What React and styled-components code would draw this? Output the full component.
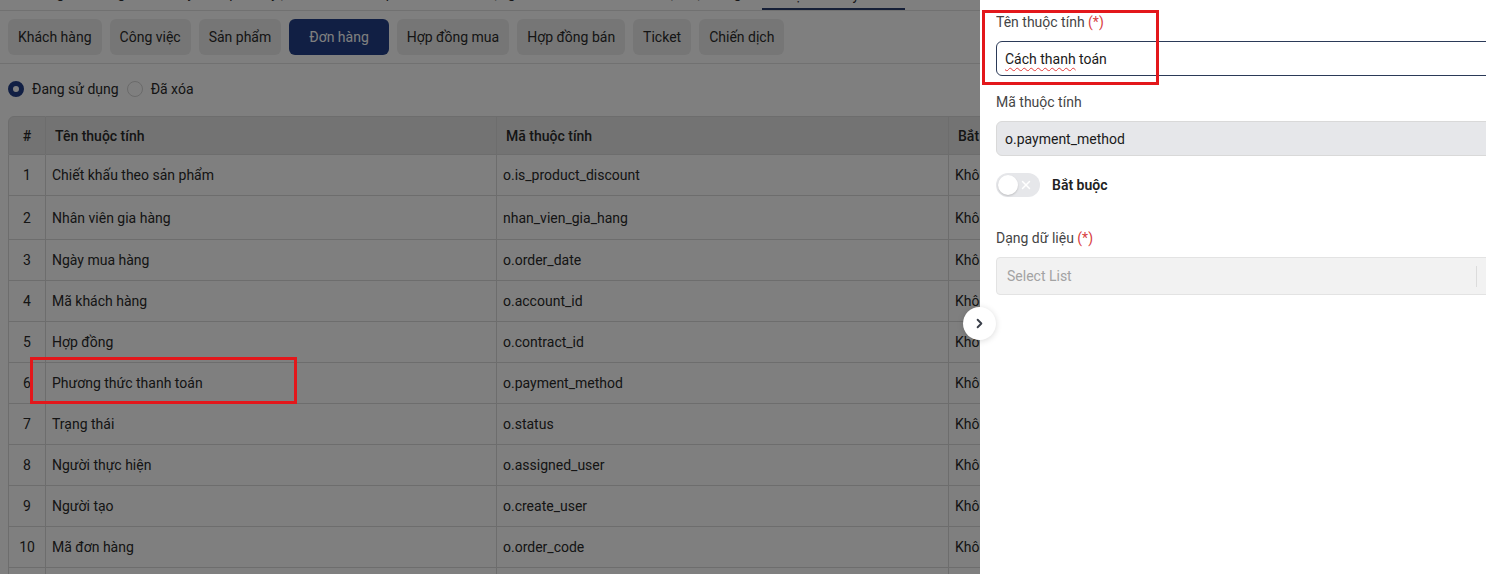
import React from 'react';
import styled, { createGlobalStyle } from 'styled-components';
import { ChevronRight, X } from 'lucide-react';

const GlobalStyle = createGlobalStyle`
  html, body { margin: 0; padding: 0; background: #fff; }
  body { font-family: Roboto, "Liberation Sans", Arial, sans-serif; font-size: 14px; color: #2a2a2a; overflow: hidden; }
  * { box-sizing: border-box; }
`;

const Page = styled.div`
  position: relative;
  width: 1486px;
  height: 574px;
  overflow: hidden;
  background: #fff;
`;

const Main = styled.div`
  display: flex;
  flex-direction: column;
`;

const TopNav = styled.div`
  display: flex;
  height: 11px;
  border-bottom: 1px solid #e3e3e3;
  overflow: hidden;
`;

const TopNavItem = styled.div`
  flex: 0 0 ${p => p.$w}px;
  height: 10px;
  display: flex;
  align-items: flex-end;
  justify-content: center;
  border-bottom: 2px solid ${p => (p.$active ? '#2a3f6e' : 'transparent')};
  overflow: visible;
`;

const TopNavLabel = styled.span`
  line-height: 16px;
  margin-bottom: ${p => (p.$active ? 5 : 7)}px;
  white-space: nowrap;
  color: #2a2a2a;
`;

const Toolbar = styled.div`
  display: flex;
  gap: 8px;
  padding: 8px;
  border-bottom: 1px solid #e3e3e3;
`;

const TabButton = styled.button`
  height: 36px;
  padding: 0 ${p => (p.$active ? 20 : 10)}px;
  border: none;
  border-radius: 6px;
  font: inherit;
  font-size: 14px;
  background: ${p => (p.$active ? '#223f88' : '#ededed')};
  color: ${p => (p.$active ? '#ffffff' : '#2a2a2a')};
  cursor: pointer;
`;

const RadioRow = styled.div`
  display: flex;
  align-items: center;
  height: 52px;
  padding: 0 8px 2px;
  gap: 8px;
`;

const RadioOption = styled.label`
  display: flex;
  align-items: center;
  gap: 8px;
  color: #2a2a2a;
`;

const RadioDot = styled.span`
  width: 16px;
  height: 16px;
  border-radius: 50%;
  border: ${p => (p.$checked ? '5px solid #223f88' : '1px solid #d4d4d4')};
  background: #fff;
  display: inline-block;
`;

const TableWrap = styled.div`
  padding: 0 8px;
`;

const Table = styled.table`
  border-collapse: separate;
  border-spacing: 0;
  width: 1470px;
  table-layout: fixed;
`;

const Th = styled.th`
  height: 39px;
  padding: 0 ${p => (p.$center ? 0 : 9)}px;
  background: #e6e6e6;
  font-weight: 500;
  text-align: ${p => (p.$center ? 'center' : 'left')};
  color: #2a2a2a;
  border-top: 1px solid #dadada;
  border-right: 1px solid #dadada;
  border-bottom: 1px solid #dadada;
  &:first-child { border-left: 1px solid #dadada; border-top-left-radius: 6px; }
`;

const Td = styled.td`
  height: ${p => (p.$tall ? 44 : 41)}px;
  padding: 0 ${p => (p.$center ? 0 : 6)}px;
  text-align: ${p => (p.$center ? 'center' : 'left')};
  border-right: 1px solid #dadada;
  border-bottom: 1px solid #dadada;
  white-space: nowrap;
  overflow: hidden;
  &:first-child { border-left: 1px solid #dadada; }
`;

const Backdrop = styled.div`
  position: absolute;
  inset: 0;
  background: rgba(0, 0, 0, 0.5);
  z-index: 1;
`;

const Drawer = styled.aside`
  position: absolute;
  top: 0;
  right: 0;
  bottom: 0;
  width: 506px;
  background: #fff;
  z-index: 2;
  padding: 0 0 0 16px;
`;

const DrawerBody = styled.div`
  width: 100%;
  height: 100%;
  overflow: hidden;
`;

const Form = styled.div`
  width: 524px;
  display: flex;
  flex-direction: column;
`;

const FieldLabel = styled.div`
  line-height: 20px;
  margin-top: ${p => p.$mt}px;
  color: #454545;
`;

const Req = styled.span`
  color: #d8403f;
`;

const InputBox = styled.div`
  margin-top: 9px;
  height: 35px;
  border: 1px solid ${p => (p.$focus ? '#2b3a58' : '#d9d9d9')};
  background: ${p => (p.$disabled ? '#e6e7ea' : '#fff')};
  border-radius: 6px;
  display: flex;
  align-items: center;
  padding: 0 8px;
  color: #1a1a1a;
`;

const Misspelled = styled.span`
  text-decoration: underline wavy #e23b3b;
  text-decoration-thickness: 1px;
  text-underline-offset: 3px;
`;

const ToggleRow = styled.div`
  margin-top: 17px;
  display: flex;
  align-items: center;
  gap: 12px;
`;

const Switch = styled.span`
  position: relative;
  width: 44px;
  height: 24px;
  border-radius: 12px;
  background: #e6e7ea;
  display: inline-flex;
  align-items: center;
  justify-content: flex-end;
  padding-right: 7px;
  color: #fff;
`;

const SwitchKnob = styled.span`
  position: absolute;
  left: 2px;
  top: 2px;
  width: 20px;
  height: 20px;
  border-radius: 50%;
  background: #fff;
  box-shadow: 0 1px 2px rgba(0, 0, 0, 0.18);
`;

const ToggleLabel = styled.span`
  font-weight: 600;
  color: #222;
`;

const SelectBox = styled.div`
  margin-top: 9px;
  height: 38px;
  border: 1px solid #e3e3e3;
  background: #f2f2f2;
  border-radius: 4px;
  display: flex;
  align-items: center;
`;

const SelectValue = styled.div`
  flex: 1;
  padding-left: 10px;
  color: #a3a3a3;
`;

const SelectSep = styled.span`
  width: 1px;
  height: 21px;
  background: #dcdcdc;
  margin-right: 42px;
`;

const CollapseButton = styled.button`
  position: absolute;
  left: -17px;
  top: 307px;
  width: 33px;
  height: 33px;
  border-radius: 50%;
  border: none;
  background: #fff;
  box-shadow: 0 1px 6px rgba(0, 0, 0, 0.15);
  display: flex;
  align-items: center;
  justify-content: center;
  color: #3a3f4a;
  padding: 0;
  z-index: 3;
`;

const Highlight = styled.div`
  position: absolute;
  border: 3px solid #e3171b;
  z-index: 4;
  pointer-events: none;
`;

const topTabs = [
  { label: 'Thông tin chung', w: 150 },
  { label: 'Quy trình phê duyệt', w: 160 },
  { label: 'Mẫu in phiếu', w: 140 },
  { label: 'Trạng thái đơn', w: 150 },
  { label: 'Danh mục hệ thống', w: 162 },
  { label: 'Thuộc tính tùy chỉnh', w: 143, active: true },
  { label: 'Kết nối ứng dụng', w: 150 },
];

const tabs = ['Khách hàng', 'Công việc', 'Sản phẩm', 'Đơn hàng', 'Hợp đồng mua', 'Hợp đồng bán', 'Ticket', 'Chiến dịch'];

const rows = [
  ['Chiết khấu theo sản phẩm', 'o.is_product_discount'],
  ['Nhân viên gia hàng', 'nhan_vien_gia_hang', true],
  ['Ngày mua hàng', 'o.order_date'],
  ['Mã khách hàng', 'o.account_id'],
  ['Hợp đồng', 'o.contract_id'],
  ['Phương thức thanh toán', 'o.payment_method'],
  ['Trạng thái', 'o.status'],
  ['Người thực hiện', 'o.assigned_user'],
  ['Người tạo', 'o.create_user'],
  ['Mã đơn hàng', 'o.order_code'],
  ['Ghi chú', 'o.note'],
];

export default function App() {
  return (
    <Page>
      <GlobalStyle />
      <Main>
        <TopNav>
          {topTabs.map(t => (
            <TopNavItem key={t.label} $w={t.w} $active={t.active}>
              <TopNavLabel $active={t.active}>{t.label}</TopNavLabel>
            </TopNavItem>
          ))}
        </TopNav>
        <Toolbar>
          {tabs.map(t => (
            <TabButton key={t} $active={t === 'Đơn hàng'}>{t}</TabButton>
          ))}
        </Toolbar>
        <RadioRow>
          <RadioOption><RadioDot $checked />Đang sử dụng</RadioOption>
          <RadioOption><RadioDot />Đã xóa</RadioOption>
        </RadioRow>
        <TableWrap>
          <Table>
            <colgroup>
              <col style={{ width: 38 }} />
              <col style={{ width: 451 }} />
              <col style={{ width: 452 }} />
              <col style={{ width: 180 }} />
              <col />
            </colgroup>
            <thead>
              <tr>
                <Th $center>#</Th>
                <Th>Tên thuộc tính</Th>
                <Th>Mã thuộc tính</Th>
                <Th>Bắt buộc</Th>
                <Th>Dạng dữ liệu</Th>
              </tr>
            </thead>
            <tbody>
              {rows.map(([name, code, tall], i) => (
                <tr key={code}>
                  <Td $center $tall={tall}>{i + 1}</Td>
                  <Td $tall={tall}>{name}</Td>
                  <Td $tall={tall}>{code}</Td>
                  <Td $tall={tall}>Không</Td>
                  <Td $tall={tall}>Select List</Td>
                </tr>
              ))}
            </tbody>
          </Table>
        </TableWrap>
      </Main>
      <Backdrop />
      <Highlight style={{ left: 30, top: 357, width: 267, height: 47 }} />
      <Drawer>
        <CollapseButton aria-label="Thu gọn">
          <ChevronRight size={15} strokeWidth={3} />
        </CollapseButton>
        <DrawerBody>
          <Form>
            <FieldLabel $mt={12}>Tên thuộc tính <Req>(*)</Req></FieldLabel>
            <InputBox $focus>
              <Misspelled>Cách thanh</Misspelled>&nbsp;toán
            </InputBox>
            <FieldLabel $mt={16}>Mã thuộc tính</FieldLabel>
            <InputBox $disabled>o.payment_method</InputBox>
            <ToggleRow>
              <Switch>
                <SwitchKnob />
                <X size={14} strokeWidth={2.5} />
              </Switch>
              <ToggleLabel>Bắt buộc</ToggleLabel>
            </ToggleRow>
            <FieldLabel $mt={31}>Dạng dữ liệu <Req>(*)</Req></FieldLabel>
            <SelectBox>
              <SelectValue>Select List</SelectValue>
              <SelectSep />
            </SelectBox>
          </Form>
        </DrawerBody>
      </Drawer>
      <Highlight style={{ left: 982, top: 10, width: 177, height: 75 }} />
    </Page>
  );
}
